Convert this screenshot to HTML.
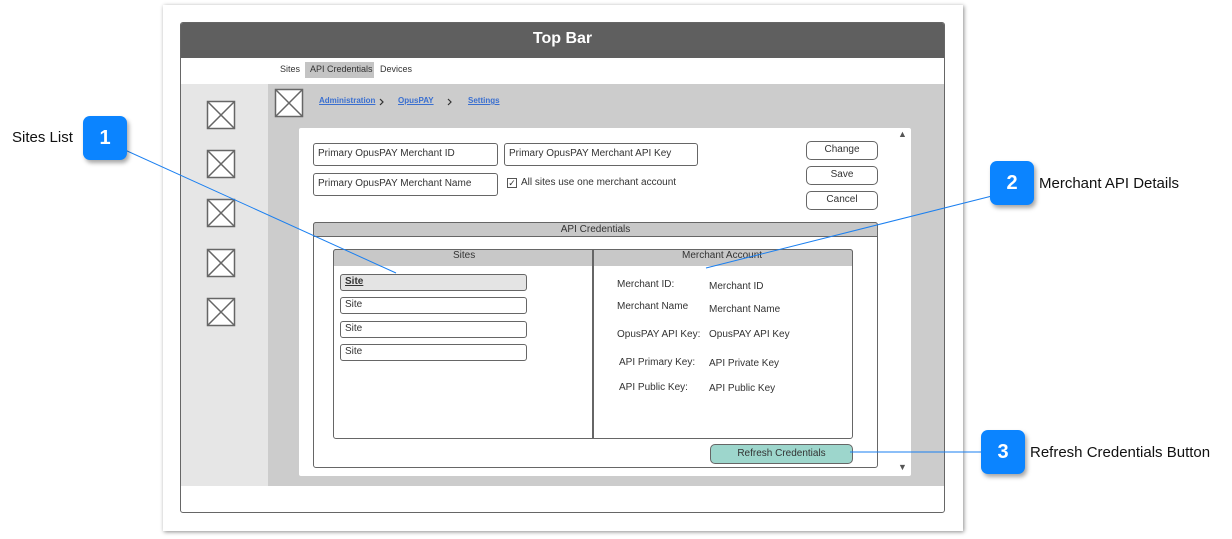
<!DOCTYPE html>
<html><head><meta charset="utf-8"><style>
body{margin:0;width:1232px;height:539px;background:#fff;position:relative;overflow:hidden;font-family:"Liberation Sans",sans-serif;}
.a{position:absolute;box-sizing:border-box;}
.t{position:absolute;white-space:nowrap;color:#333;font-size:10px;}
.inp{position:absolute;box-sizing:border-box;border:1.5px solid #666;border-radius:3px;background:#fff;font-size:10px;color:#333;padding:0 4px;line-height:20px;}
.btn{position:absolute;box-sizing:border-box;border:1.5px solid #666;border-radius:5px;background:#fff;font-size:10px;color:#333;text-align:center;line-height:15px;}
.co{position:absolute;width:44px;height:44px;background:#0b84ff;border-radius:7px;color:#fff;font-weight:bold;font-size:20px;text-align:center;line-height:44px;box-shadow:2px 3px 4px rgba(0,0,0,.35);}
.cl{position:absolute;font-size:15px;color:#111;white-space:nowrap;}
.lk{color:#3a6fd0;text-decoration:underline;font-weight:bold;font-size:9px;position:absolute;}
.s{padding:0 4px;line-height:14px;}
</style></head><body>
<div class="a" style="left:163px;top:5px;width:800px;height:526px;background:#fff;box-shadow:1px 1px 4px rgba(0,0,0,.45);"></div>
<div class="a" style="left:180px;top:22px;width:765px;height:491px;border:1.5px solid #666;border-radius:3px;background:#fff;overflow:hidden;">
 <div class="a" style="left:0;top:0;width:100%;height:35px;background:#5f5f5f;color:#fff;font-weight:bold;font-size:16px;text-align:center;line-height:32px;">Top Bar</div>
 <div class="a" style="left:0;top:61px;width:88px;height:402px;background:#e6e6e6;"></div>
 <div class="a" style="left:87px;top:61px;width:678px;height:402px;background:#cccccc;"></div>
</div>
<div class="t" style="left:280px;top:64px;font-size:9px;">Sites</div>
<div class="a" style="left:305px;top:62px;width:69px;height:16px;background:#c4c4c4;"></div>
<div class="t" style="left:310px;top:64px;font-size:9px;">API Credentials</div>
<div class="t" style="left:380px;top:64px;font-size:9px;">Devices</div>
<svg class="a" style="left:0;top:0" width="1232" height="539">
 <g fill="#fff" stroke="#666" stroke-width="1.5">
  <rect x="207.5" y="101.5" width="27" height="27"/><path d="M207.5 101.5L234.5 128.5M234.5 101.5L207.5 128.5"/>
  <rect x="207.5" y="150.5" width="27" height="27"/><path d="M207.5 150.5L234.5 177.5M234.5 150.5L207.5 177.5"/>
  <rect x="207.5" y="199.5" width="27" height="27"/><path d="M207.5 199.5L234.5 226.5M234.5 199.5L207.5 226.5"/>
  <rect x="207.5" y="249.5" width="27" height="27"/><path d="M207.5 249.5L234.5 276.5M234.5 249.5L207.5 276.5"/>
  <rect x="207.5" y="298.5" width="27" height="27"/><path d="M207.5 298.5L234.5 325.5M234.5 298.5L207.5 325.5"/>
  <rect x="275.5" y="89.5" width="27" height="27"/><path d="M275.5 89.5L302.5 116.5M302.5 89.5L275.5 116.5"/>
 </g>
 <g fill="none" stroke="#333" stroke-width="1.2"><path d="M380 99l3 3-3 3M448 99l3 3-3 3"/></g>
</svg>
<span class="lk" style="left:319px;top:96px;font-size:8px;">Administration</span>
<span class="lk" style="left:398px;top:96px;font-size:8px;">OpusPAY </span>
<span class="lk" style="left:468px;top:96px;font-size:8px;">Settings</span>
<div class="a" style="left:299px;top:128px;width:612px;height:348px;background:#fff;border-radius:2px;"></div>
<div class="t" style="left:898px;top:129px;font-size:9px;color:#555;">▲</div>
<div class="t" style="left:898px;top:462px;font-size:9px;color:#555;">▼</div>
<div class="inp" style="left:313px;top:143px;width:185px;height:23px;">Primary OpusPAY Merchant ID</div>
<div class="inp" style="left:504px;top:143px;width:194px;height:23px;">Primary OpusPAY Merchant API Key</div>
<div class="inp" style="left:313px;top:173px;width:185px;height:23px;">Primary OpusPAY Merchant Name</div>
<div class="a" style="left:507px;top:178px;width:10px;height:10px;border:1px solid #555;font-size:9px;line-height:8px;text-align:center;color:#333;">✓</div>
<div class="t" style="left:521px;top:177px;">All sites use one merchant account</div>
<div class="btn" style="left:806px;top:141px;width:72px;height:19px;">Change</div>
<div class="btn" style="left:806px;top:166px;width:72px;height:19px;">Save</div>
<div class="btn" style="left:806px;top:191px;width:72px;height:19px;">Cancel</div>
<div class="a" style="left:313px;top:222px;width:565px;height:246px;border:1.5px solid #666;border-radius:3px;"></div>
<div class="a" style="left:313px;top:222px;width:565px;height:15px;background:#c8c8c8;border:1.5px solid #666;border-radius:3px 3px 0 0;font-size:10px;color:#333;text-align:center;line-height:13px;">API Credentials</div>
<div class="a" style="left:333px;top:249px;width:520px;height:190px;border:1.5px solid #666;border-radius:3px;"></div>
<div class="a" style="left:333px;top:249px;width:520px;height:17px;background:#c8c8c8;border:1.5px solid #666;border-bottom:none;border-radius:3px 3px 0 0;"></div>
<div class="a" style="left:592px;top:249px;width:1.5px;height:190px;background:#666;"></div>
<div class="t" style="left:453px;top:250px;">Sites</div>
<div class="t" style="left:682px;top:250px;">Merchant Account</div>
<div class="inp s" style="left:340px;top:274px;width:187px;height:17px;background:#e4e4e4;font-weight:bold;text-decoration:underline;">Site</div>
<div class="inp s" style="left:340px;top:297px;width:187px;height:17px;">Site</div>
<div class="inp s" style="left:340px;top:321px;width:187px;height:17px;">Site</div>
<div class="inp s" style="left:340px;top:344px;width:187px;height:17px;">Site</div>
<div class="t" style="left:617px;top:279px;">Merchant ID:</div>
<div class="t" style="left:709px;top:281px;">Merchant ID</div>
<div class="t" style="left:617px;top:301px;">Merchant Name</div>
<div class="t" style="left:709px;top:304px;">Merchant Name</div>
<div class="t" style="left:617px;top:329px;">OpusPAY API Key:</div>
<div class="t" style="left:709px;top:329px;">OpusPAY API Key</div>
<div class="t" style="left:619px;top:357px;">API Primary Key:</div>
<div class="t" style="left:709px;top:358px;">API Private Key</div>
<div class="t" style="left:619px;top:382px;">API Public Key:</div>
<div class="t" style="left:709px;top:383px;">API Public Key</div>
<div class="btn" style="left:710px;top:444px;width:143px;height:20px;background:#9dd6cc;line-height:17px;">Refresh Credentials</div>
<svg class="a" style="left:0;top:0" width="1232" height="539">
 <g stroke="#1a7ff0" stroke-width="1" fill="none">
  <path d="M125 150L396 273"/><path d="M992 196L706 268"/><path d="M850 452L982 452"/>
 </g>
</svg>
<div class="co" style="left:83px;top:116px;">1</div>
<div class="cl" style="left:12px;top:129px;">Sites List</div>
<div class="co" style="left:990px;top:161px;">2</div>
<div class="cl" style="left:1039px;top:175px;">Merchant API Details</div>
<div class="co" style="left:981px;top:430px;">3</div>
<div class="cl" style="left:1030px;top:444px;">Refresh Credentials Button</div>
</body></html>
